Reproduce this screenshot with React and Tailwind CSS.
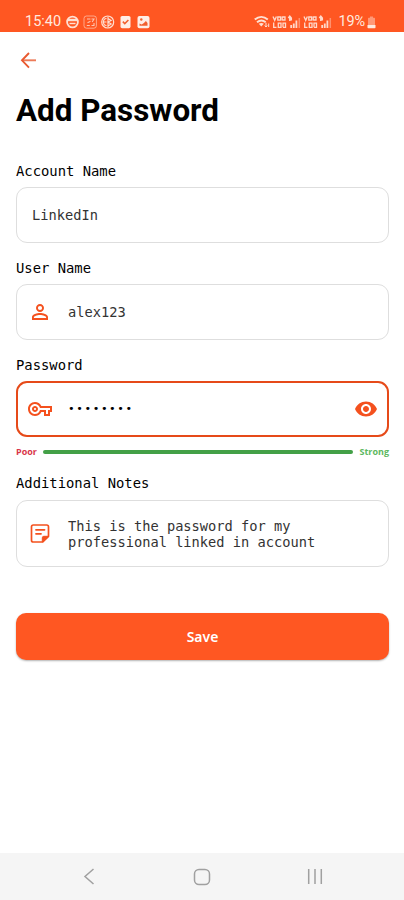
import { useState } from 'react'
import { MdOutlineVpnKey, MdPersonOutline, MdVisibility } from 'react-icons/md'

function StatusIcons() {
  return (
    <svg className="w-[85px] h-[16px] ml-[4px]" viewBox="0 0 85 16" fill="none" stroke="#ffe0d3" strokeWidth="1.4">
      <circle cx="7.5" cy="8" r="5.4" strokeWidth="1.8"/>
      <path d="M2.500 6h10" strokeWidth="2.4"/>
      <path d="M4.500 9.500h6" strokeWidth="1.4"/>
      <rect x="19" y="2" width="12.4" height="12.2" rx="2.5" strokeWidth="0.9" opacity=".65"/>
      <path d="M22 5h3.400M26.500 5h2.500l-1.800 3M21.800 11.500h3M26.500 11.500h2.500V9M22.500 8.800l3-1.500" strokeWidth="1.1" opacity=".8"/>
      <circle cx="42.7" cy="8" r="6" strokeWidth="1.2"/>
      <path d="M37.500 8h4M43 2.500v11M41.500 4.500c-4 0-4 7 0 7M43 4.500l3.200 2L43 8l3.200 2L43 12" strokeWidth="1.1"/>
      <rect x="55.500" y="2" width="10" height="12.2" rx="1.6" fill="#ffeee7" stroke="none"/>
      <path d="M57.800 7.600l2 2 3.600-3.600" stroke="#f2602f" strokeWidth="1.5"/>
      <rect x="72.500" y="2" width="12" height="12.2" rx="2" fill="#ffeee7" stroke="none"/>
      <path d="M74.500 11.800V9.500l2.200 1 2.200-1.600 2-1.900 1.600 2v2.800z" fill="#f2602f" stroke="none"/>
      <circle cx="76.300" cy="5.500" r="1.200" fill="#f2602f" stroke="none"/>
    </svg>
  )
}

function SimSignal() {
  return (
    <svg className="w-[30px] h-[14px]" viewBox="0 0 30 14" fill="none" stroke="#ffd9cb" strokeWidth="1.300">
      <path d="M1 1.500l1.700 3.800 1.700-3.800M5.800 2h2.800v3.200H5.800zM10.200 1.500v4M10.200 2h2.800v3h-2.800"/>
      <path d="M1.700 7.500v4.800h2.800M6.300 8.200h2.700v4.100H6.300zM11 12.300V8.200h2.500v4.100H11"/>
      <path d="M17.800 1v5M16.300 3l1.500-1.800L19.300 3v2.500" strokeWidth="1.500"/>
      <path d="M19.200 13v-3M21.800 13V8.500M24.400 13V5.500" strokeWidth="1.800"/>
      <path d="M27.300 13V3" strokeWidth="1.500" opacity=".45"/>
    </svg>
  )
}

function StatusBar() {
  return (
    <div className="h-8 bg-[#ff5722] flex items-center pt-[12px] pl-[25px] pr-[28px] font-[Roboto,sans-serif] text-[14.5px] leading-4 text-[#ffe9df]">
      <span>15:40</span>
      <StatusIcons />
      <div className="ml-auto flex items-center">
        <svg className="w-[18px] h-[14px]" viewBox="0 0 18 14" fill="none" stroke="#ffe0d3" strokeWidth="1.9">
          <path d="M.800 4.500c4-3.500 9-3.500 13 0M3 7.200c2.700-2.200 6-2.200 8.700 0"/>
          <path d="M4.800 8.800c1.700-1 3.400-1 5 0l-2.500 2.700z" fill="#ffe0d3" stroke="none"/>
          <path d="M12 7.800v4M10.700 10.500l1.300 1.500 1.300-1.500M14.700 12V8.500" strokeWidth="1"/>
        </svg>
        <SimSignal />
        <span className="w-[1px]" />
        <SimSignal />
        <span className="ml-[5px] tracking-[-0.1px]">19%</span>
        <svg className="w-[9px] h-[13px] ml-[2px]" viewBox="0 0 9 13" fill="#ffe9df">
          <path d="M3 .5h3v1.3h1.200c.5 0 .8.3.8.8V9H1V2.600c0-.5.3-.8.8-.8H3z" opacity=".45"/>
          <path d="M.500 9h8v2.500c0 .5-.3.8-.8.8H1.300c-.5 0-.8-.3-.8-.8z"/>
        </svg>
      </div>
    </div>
  )
}

function NoteIcon() {
  return (
    <svg className="w-6 h-6" viewBox="0 0 24 24" fill="none" stroke="currentColor" strokeWidth="1.700" strokeLinejoin="round">
      <path d="M14.800 20H5.300A1.800 1.800 0 0 1 3.500 18.200V4.800A1.800 1.800 0 0 1 5.300 3h13.400A1.800 1.800 0 0 1 20.500 4.800V14.300z"/>
      <path d="M14.300 20v-4.200a1.500 1.500 0 0 1 1.500-1.500h4.500z" fill="currentColor" strokeWidth="1"/>
      <path d="M8 7.800h8.500M8 11.800h5" strokeLinecap="round" strokeWidth="1.800"/>
    </svg>
  )
}

function Label({ children }) {
  return <label className="block h-4 text-[13.85px] leading-4 text-black">{children}</label>
}

function Field({ icon, children, className }) {
  return (
    <div className={`flex items-center rounded-[11px] text-[13.7px] leading-4 text-[#333] ${className}`}>
      {icon && <span className="w-6 mr-[16px] text-[#f4511e] flex-shrink-0">{icon}</span>}
      {children}
    </div>
  )
}

export default function App() {
  const [account, setAccount] = useState('LinkedIn')
  const [user, setUser] = useState('alex123')

  return (
    <div className="w-full h-[900px] bg-white flex flex-col font-['DejaVu_Sans_Mono',monospace]">
      <StatusBar />
      <main className="flex-1 flex flex-col pl-4 pr-[15px]">
        <button className="mt-4 w-6 h-6 text-[#e95a30]">
          <svg className="w-6 h-6" viewBox="0 0 24 24" fill="none" stroke="currentColor" strokeWidth="1.900">
            <path d="M13 5l-7 7.300 7 7.300"/>
            <path d="M6 12.300h14" opacity=".8"/>
          </svg>
        </button>
        <h1 className="mt-[19px] h-10 leading-10 text-[31.4px] font-bold text-black font-[Roboto,sans-serif]">Add Password</h1>

        <div className="mt-8"><Label>Account Name</Label></div>
        <Field className="mt-2 h-14 border-[1.5px] border-[#dedede] pl-[15px]">
          <input value={account} onChange={e => setAccount(e.target.value)} className="w-full outline-none"/>
        </Field>

        <div className="mt-[17px]"><Label>User Name</Label></div>
        <Field className="mt-2 h-14 border-[1.5px] border-[#dedede] pl-[11px]" icon={<MdPersonOutline size={24} />}>
          <input value={user} onChange={e => setUser(e.target.value)} className="w-full outline-none"/>
        </Field>

        <div className="mt-[17px]"><Label>Password</Label></div>
        <Field className="mt-2 h-14 border-2 border-[#e64a19] pl-[10px]" icon={<MdOutlineVpnKey size={24} />}>
          <span className="flex-1 text-[11px] tracking-[1.6px] text-black">••••••••</span>
          <MdVisibility size={24} className="mr-[9px] text-[#f4511e]" />
        </Field>

        <div className="mt-[7px] h-4 flex items-center font-['Open_Sans',sans-serif] text-[9px] font-bold">
          <span className="w-[27px] text-[#d9364a]">Poor</span>
          <span className="flex-1 h-1 rounded-full bg-[#43a047]"/>
          <span className="w-[36px] text-right text-[#5cb860]">Strong</span>
        </div>

        <div className="mt-[15px]"><Label>Additional Notes</Label></div>
        <Field className="mt-[9px] h-[67px] border-[1.5px] border-[#dedede] pl-[11px]" icon={<NoteIcon />}>
          <p>This is the password for my<br/>professional linked in account</p>
        </Field>

        <button className="mt-[46px] h-[47px] rounded-[10px] bg-[#ff5722] shadow-[0_1px_2px_rgba(0,0,0,0.3)] text-white text-[14px] font-semibold font-['Noto_Sans',sans-serif]">
          Save
        </button>
      </main>

      <nav className="h-[47px] bg-[#f5f5f5] flex-shrink-0">
        <svg className="w-full h-full" viewBox="0 0 404 47" fill="none" stroke="#a0a0a0" strokeWidth="1.5">
          <path d="M93.500 16l-8.500 7.500 8.500 7.500"/>
          <rect x="194.500" y="16.500" width="15" height="15" rx="4.500"/>
          <path d="M308.700 16v15M315 16v15M321.300 16v15"/>
        </svg>
      </nav>
    </div>
  )
}
